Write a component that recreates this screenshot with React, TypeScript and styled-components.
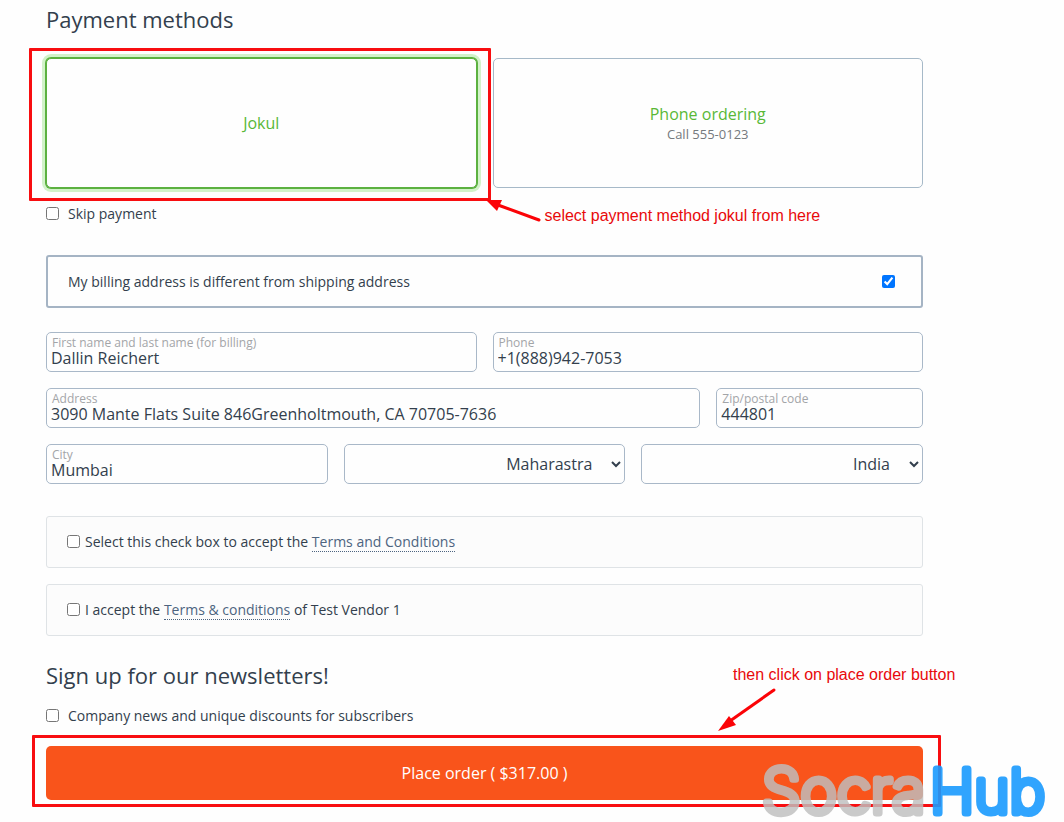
import React, { useState } from "react";
import styled, { createGlobalStyle } from "styled-components";

const GlobalStyle = createGlobalStyle`
  *, *::before, *::after { box-sizing: border-box; }
  body {
    margin: 0;
    background: #fefefe;
    color: #333f4d;
    font-family: "Open Sans", "Noto Sans", sans-serif;
    font-size: 14px;
    line-height: 20px;
  }
`;

const Page = styled.div`
  position: relative;
  padding: 3px 141px 22px 46px;
`;

const Checkout = styled.form`
  display: flex;
  flex-direction: column;
`;

const Heading = styled.h2`
  margin: 0;
  font-size: 22px;
  font-weight: 400;
  line-height: 32px;
`;

const Methods = styled.div`
  display: grid;
  grid-template-columns: 1fr 1fr;
  gap: 16px;
  margin: 23px 0 16px;
`;

const MethodSlot = styled.div`
  position: relative;
  display: flex;
`;

const MethodCard = styled.button<{ $selected: boolean }>`
  display: flex;
  flex: 1;
  flex-direction: column;
  align-items: center;
  justify-content: center;
  min-height: 130px;
  padding: 0;
  border: 1px solid ${(p) => (p.$selected ? "#5cb140" : "#a6b9c8")};
  border-radius: 5px;
  background: #fefefe;
  box-shadow: ${(p) => (p.$selected ? "0 0 0 1px #5cb140, 0 0 0 4px #d2f2c9" : "none")};
  color: #59b837;
  font-family: inherit;
  font-size: 16px;
  line-height: 20px;
  cursor: pointer;
`;

const MethodNote = styled.span`
  margin-bottom: -2px;
  color: #75797d;
  font-size: 13px;
`;

const CheckRow = styled.label`
  display: flex;
  align-items: center;
  gap: 9px;
  height: 20px;
`;

const Checkbox = styled.input.attrs({ type: "checkbox" })`
  flex: none;
  width: 13px;
  height: 13px;
  margin: 0 0 1px;
`;

const BillingToggle = styled.label`
  display: flex;
  align-items: center;
  justify-content: space-between;
  height: 53px;
  margin: 31px 0 24px;
  padding: 0 26px 0 20px;
  border: 2px solid #a5b4c4;
  border-radius: 3px;
`;

const FieldRow = styled.div<{ $columns: string }>`
  display: grid;
  grid-template-columns: ${(p) => p.$columns};
  gap: 16px;
  margin-bottom: 16px;
`;

const FieldBox = styled.label`
  display: flex;
  flex-direction: column;
  min-width: 0;
  height: 40px;
  padding: 2px 4px 0;
  border: 1px solid #a9b8c8;
  border-radius: 5px;
`;

const FieldCaption = styled.span`
  padding-left: 1px;
  color: #a3a5a8;
  font-size: 12px;
  line-height: 16px;
`;

const FieldInput = styled.input`
  width: 100%;
  height: 20px;
  margin-top: -3px;
  padding: 0;
  border: 0;
  outline: 0;
  background: transparent;
  color: inherit;
  font-family: inherit;
  font-size: 16px;
  line-height: 20px;
`;

const Select = styled.select`
  min-width: 0;
  width: 100%;
  height: 40px;
  padding: 0 16px 0 4px;
  border: 1px solid #a9b8c8;
  border-radius: 5px;
  background: #fefefe;
  color: #333f4d;
  font-family: inherit;
  font-size: 16px;
  text-align: right;
  text-align-last: right;
`;

const Agreements = styled.div`
  display: flex;
  flex-direction: column;
  gap: 16px;
  margin: 16px 0 23px;
`;

const Agreement = styled.div`
  display: flex;
  align-items: center;
  gap: 5px;
  height: 52px;
  padding: 0 20px;
  border: 1px solid #dfe3e6;
  border-radius: 3px;
  background: #fcfcfc;
`;

const TermsLink = styled.a`
  border-bottom: 1px dotted #4d6480;
  color: #4d6480;
  text-decoration: none;
`;

const Newsletter = styled.div`
  display: flex;
  flex-direction: column;
  gap: 15px;
  margin-bottom: 20px;
`;

const OrderSlot = styled.div`
  position: relative;
  display: flex;
`;

const OrderButton = styled.button`
  flex: 1;
  height: 54px;
  border: 0;
  border-radius: 5px;
  background: #f9541b;
  color: #fff;
  font-family: inherit;
  font-size: 16px;
  cursor: pointer;
`;

const Highlight = styled.div<{ $inset: string }>`
  position: absolute;
  inset: ${(p) => p.$inset};
  z-index: 1;
  border: 3px solid #f80d10;
  border-radius: 1px;
  pointer-events: none;
`;

const Callout = styled.p<{ $left: string; $top: string }>`
  position: absolute;
  left: ${(p) => p.$left};
  top: ${(p) => p.$top};
  z-index: 1;
  margin: 0;
  color: #e8090b;
  font-family: "Liberation Sans", Arial, sans-serif;
  font-size: 16px;
  line-height: 20px;
  white-space: nowrap;
`;

const Arrow = styled.svg<{ $left: string; $top: string }>`
  position: absolute;
  left: ${(p) => p.$left};
  top: ${(p) => p.$top};
  z-index: 1;
  overflow: visible;
  pointer-events: none;
`;

const Watermark = styled.svg`
  position: absolute;
  right: 16px;
  bottom: 0;
  z-index: 2;
  pointer-events: none;
`;

function Field({ caption, value }: { caption: string; value: string }) {
  return (
    <FieldBox>
      <FieldCaption>{caption}</FieldCaption>
      <FieldInput type="text" defaultValue={value} />
    </FieldBox>
  );
}

export default function App() {
  const [method, setMethod] = useState("jokul");

  return (
    <Page>
      <GlobalStyle />
      <Checkout onSubmit={(e: React.FormEvent) => e.preventDefault()}>
        <Heading>Payment methods</Heading>
        <Methods>
          <MethodSlot>
            <MethodCard type="button" $selected={method === "jokul"} onClick={() => setMethod("jokul")}>
              Jokul
            </MethodCard>
            <Highlight $inset="-10px -14px -13px -17px" />
            <Arrow $left="calc(100% + 9px)" $top="141px" width="56" height="24" viewBox="0 0 56 24">
              <path d="M53 21L12 6" stroke="#fb0307" strokeWidth="3" strokeLinecap="round" />
              <path d="M0 1L16 1L11 12Z" fill="#fb0307" />
            </Arrow>
            <Callout $left="calc(100% + 68px)" $top="148px">
              select payment method jokul from here
            </Callout>
          </MethodSlot>
          <MethodSlot>
            <MethodCard type="button" $selected={method === "phone"} onClick={() => setMethod("phone")}>
              Phone ordering
              <MethodNote>Call 555-0123</MethodNote>
            </MethodCard>
          </MethodSlot>
        </Methods>
        <CheckRow>
          <Checkbox />
          Skip payment
        </CheckRow>

        <BillingToggle>
          My billing address is different from shipping address
          <Checkbox defaultChecked />
        </BillingToggle>

        <FieldRow $columns="1fr 1fr">
          <Field caption="First name and last name (for billing)" value="Dallin Reichert" />
          <Field caption="Phone" value="+1(888)942-7053" />
        </FieldRow>
        <FieldRow $columns="76fr 24fr">
          <Field caption="Address" value="3090 Mante Flats Suite 846Greenholtmouth, CA 70705-7636" />
          <Field caption="Zip/postal code" value="444801" />
        </FieldRow>
        <FieldRow $columns="1fr 1fr 1fr">
          <Field caption="City" value="Mumbai" />
          <Select aria-label="State" defaultValue="Maharastra">
            <option>Maharastra</option>
          </Select>
          <Select aria-label="Country" defaultValue="India">
            <option>India</option>
          </Select>
        </FieldRow>

        <Agreements>
          <Agreement>
            <Checkbox id="accept-terms" />
            <label htmlFor="accept-terms">
              Select this check box to accept the <TermsLink href="#terms">Terms and Conditions</TermsLink>
            </label>
          </Agreement>
          <Agreement>
            <Checkbox id="accept-vendor" />
            <label htmlFor="accept-vendor">
              I accept the <TermsLink href="#vendor-terms">Terms &amp; conditions</TermsLink> of Test Vendor 1
            </label>
          </Agreement>
        </Agreements>

        <Newsletter>
          <Heading>Sign up for our newsletters!</Heading>
          <CheckRow>
            <Checkbox />
            Company news and unique discounts for subscribers
          </CheckRow>
        </Newsletter>

        <OrderSlot>
          <OrderButton type="submit">Place order ( $317.00 )</OrderButton>
          <Highlight $inset="-11px -18px -7px -14px" />
          <Arrow $left="calc(100% - 205px)" $top="-58px" width="58" height="44" viewBox="0 0 58 44">
            <path d="M56 2L12 33" stroke="#fb0307" strokeWidth="3" strokeLinecap="round" />
            <path d="M0 43L11 28L18 37Z" fill="#fb0307" />
          </Arrow>
          <Callout $left="calc(100% - 190px)" $top="-81px">
            then click on place order button
          </Callout>
        </OrderSlot>
      </Checkout>

      <Watermark
        width="290"
        height="76"
        viewBox="0 0 290 76"
        fontFamily="Inter, sans-serif"
        fontWeight="200"
        strokeWidth="7"
        strokeLinejoin="round"
        strokeLinecap="round"
      >
        <g opacity="0.82" fill="#bfbfbf" stroke="#bfbfbf" fontSize="62">
          <text x="4" y="67">Socra</text>
        </g>
        <g opacity="0.9" fill="#1a9bff" stroke="#1a9bff" fontSize="60">
          <text x="172" y="67">Hub</text>
        </g>
      </Watermark>
    </Page>
  );
}
